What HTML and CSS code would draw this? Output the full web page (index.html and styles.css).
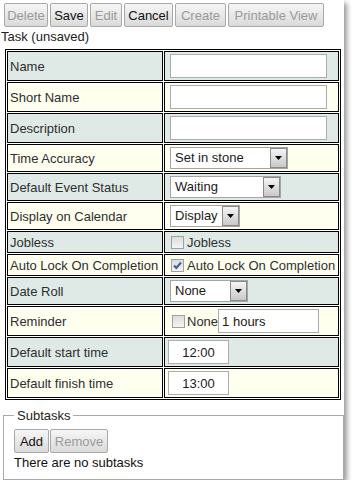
FILE: index.html
```html
<!DOCTYPE html>
<html>
<head>
<meta charset="utf-8">
<link rel="stylesheet" href="styles.css">
</head>
<body>
<div class="page">
  <div class="toolbar">
    <button class="btn w-delete" disabled>Delete</button>
    <button class="btn w-save">Save</button>
    <button class="btn w-edit" disabled>Edit</button>
    <button class="btn w-cancel">Cancel</button>
    <button class="btn w-create" disabled>Create</button>
    <button class="btn w-print" disabled>Printable View</button>
  </div>
  <div class="title">Task (unsaved)</div>
  <table class="form">
    <tr class="teal">
      <td class="lbl">Name</td>
      <td class="val"><input class="txt w-name" type="text"></td>
    </tr>
    <tr class="cream">
      <td class="lbl">Short Name</td>
      <td class="val"><input class="txt w-name" type="text"></td>
    </tr>
    <tr class="teal">
      <td class="lbl">Description</td>
      <td class="val"><input class="txt w-name" type="text"></td>
    </tr>
    <tr class="cream">
      <td class="lbl">Time Accuracy</td>
      <td class="val"><div class="sel w-acc"><span class="sel-text">Set in stone</span><span class="sel-btn"><svg width="7" height="4" viewBox="0 0 7 4"><path d="M0 0H7L3.5 4Z" fill="#000"/></svg></span></div></td>
    </tr>
    <tr class="teal">
      <td class="lbl">Default Event Status</td>
      <td class="val"><div class="sel w-wait"><span class="sel-text">Waiting</span><span class="sel-btn"><svg width="7" height="4" viewBox="0 0 7 4"><path d="M0 0H7L3.5 4Z" fill="#000"/></svg></span></div></td>
    </tr>
    <tr class="cream">
      <td class="lbl">Display on Calendar</td>
      <td class="val"><div class="sel w-disp"><span class="sel-text">Display</span><span class="sel-btn"><svg width="7" height="4" viewBox="0 0 7 4"><path d="M0 0H7L3.5 4Z" fill="#000"/></svg></span></div></td>
    </tr>
    <tr class="teal">
      <td class="lbl">Jobless</td>
      <td class="val"><div class="chk-row"><span class="cb"></span><span class="chk-label">Jobless</span></div></td>
    </tr>
    <tr class="cream">
      <td class="lbl">Auto Lock On Completion</td>
      <td class="val"><div class="chk-row"><span class="cb"><svg width="11" height="11" viewBox="0 0 11 11"><path d="M2 5.5L4.3 8L9 2.5" fill="none" stroke="#3b5b99" stroke-width="2"/></svg></span><span class="chk-label">Auto Lock On Completion</span></div></td>
    </tr>
    <tr class="teal">
      <td class="lbl">Date Roll</td>
      <td class="val"><div class="sel w-none"><span class="sel-text">None</span><span class="sel-btn"><svg width="7" height="4" viewBox="0 0 7 4"><path d="M0 0H7L3.5 4Z" fill="#000"/></svg></span></div></td>
    </tr>
    <tr class="cream">
      <td class="lbl">Reminder</td>
      <td class="val"><div class="rem-row"><span class="cb cb-rem"></span><span class="rem-label">None</span><input class="txt w-hours" type="text" value="1 hours"></div></td>
    </tr>
    <tr class="teal">
      <td class="lbl">Default start time</td>
      <td class="val"><input class="txt time" type="text" value="12:00"></td>
    </tr>
    <tr class="cream">
      <td class="lbl">Default finish time</td>
      <td class="val"><input class="txt time" type="text" value="13:00"></td>
    </tr>
  </table>
  <fieldset class="subtasks">
    <legend>Subtasks</legend>
    <div class="sub-bar">
      <button class="btn w-add">Add</button>
      <button class="btn w-remove" disabled>Remove</button>
    </div>
    <div class="empty">There are no subtasks</div>
  </fieldset>
</div>
</body>
</html>
```

FILE: styles.css
```css
html, body {
  margin: 0;
  padding: 0;
  background: #ffffff;
}
body {
  font-family: "Liberation Sans", Arial, sans-serif;
  font-size: 13px;
  color: #222;
}
.page {
  width: 344px;
  height: 480px;
  box-sizing: border-box;
  padding: 3px 0 0 1px;
  background: #fff;
  box-shadow: 3px 3px 5px rgba(0, 0, 0, 0.4);
}
.toolbar {
  display: flex;
  gap: 2px;
  margin-left: 3px;
  height: 24px;
}
.btn {
  box-sizing: border-box;
  height: 24px;
  padding: 0;
  margin: 0;
  font-family: "Liberation Sans", Arial, sans-serif;
  font-size: 13px;
  font-weight: normal;
  color: #111;
  background: linear-gradient(#f6f6f6, #dadada);
  border: 1px solid #a9a9a9;
  border-radius: 2px;
  text-align: center;
}
.btn:disabled {
  color: #9a9a9a;
}
.w-delete { width: 44px; }
.w-save { width: 38px; }
.w-edit { width: 32px; }
.w-cancel { width: 49px; }
.w-create { width: 51px; }
.w-print { width: 96px; }
.title {
  margin-top: 2px;
  line-height: 15px;
  color: #222;
}
.form {
  margin: 5px 0 0 4px;
  border: 1px solid #000;
  border-spacing: 1px;
  border-collapse: separate;
  width: 336px;
  table-layout: fixed;
}
.form td {
  border: 1px solid #000;
  padding: 2px;
  vertical-align: middle;
  line-height: 15px;
}
.form td.lbl {
  width: 150px;
  color: #2e2e2e;
  white-space: nowrap;
}
.form td.val {
  width: 169px;
}
.teal td { background: #dfeae7; }
.cream td { background: #fffff0; }
.txt {
  box-sizing: border-box;
  display: block;
  height: 24px;
  margin: 0 0 0 3px;
  padding: 0 3px;
  border: 1px solid #a9acb0;
  background: #fff;
  font-family: "Liberation Sans", Arial, sans-serif;
  font-size: 13px;
  color: #1a1a1a;
  outline: none;
}
.w-name { width: 157px; }
.w-hours { width: 101px; margin-left: 0; }
.time {
  width: 61px;
  margin-left: 1px;
  text-align: center;
}
.sel {
  box-sizing: border-box;
  display: flex;
  height: 22px;
  margin-left: 3px;
  border: 1px solid #a5a5a5;
  background: #fff;
}
.sel-text {
  flex: 1;
  padding-left: 4px;
  line-height: 20px;
  color: #1a1a1a;
  white-space: nowrap;
}
.sel-btn {
  box-sizing: border-box;
  width: 17px;
  display: flex;
  align-items: center;
  justify-content: center;
  border: 1px solid #8a8a8a;
  background: linear-gradient(#f4f4f4, #c9c9c9);
}
.w-acc { width: 118px; }
.w-wait { width: 111px; }
.w-disp { width: 70px; }
.w-none { width: 78px; }
.chk-row, .rem-row {
  display: flex;
  align-items: center;
  height: 16px;
}
.rem-row { height: 24px; }
.cb {
  box-sizing: border-box;
  width: 13px;
  height: 13px;
  margin-left: 4px;
  border: 1px solid #a0a0a0;
  background: linear-gradient(#dcdcdc, #f4f4f4);
  display: flex;
  align-items: center;
  justify-content: center;
  flex: none;
}
.cb-rem { margin-left: 5px; }
.chk-label {
  margin-left: 3px;
  white-space: nowrap;
  color: #2e2e2e;
}
.rem-label {
  margin-left: 2px;
  color: #2e2e2e;
}
.subtasks {
  box-sizing: border-box;
  width: 341px;
  margin: 8px 0 0 2px;
  padding: 6px 10px 9px 10px;
  border: 1px solid #a9a9a9;
}
.subtasks legend {
  padding: 0 3px;
  line-height: 15px;
  color: #222;
}
.sub-bar {
  display: flex;
  gap: 1px;
  height: 24px;
}
.w-add { width: 35px; }
.w-remove { width: 58px; }
.empty {
  margin-top: 2px;
  line-height: 15px;
  color: #111;
}
```
